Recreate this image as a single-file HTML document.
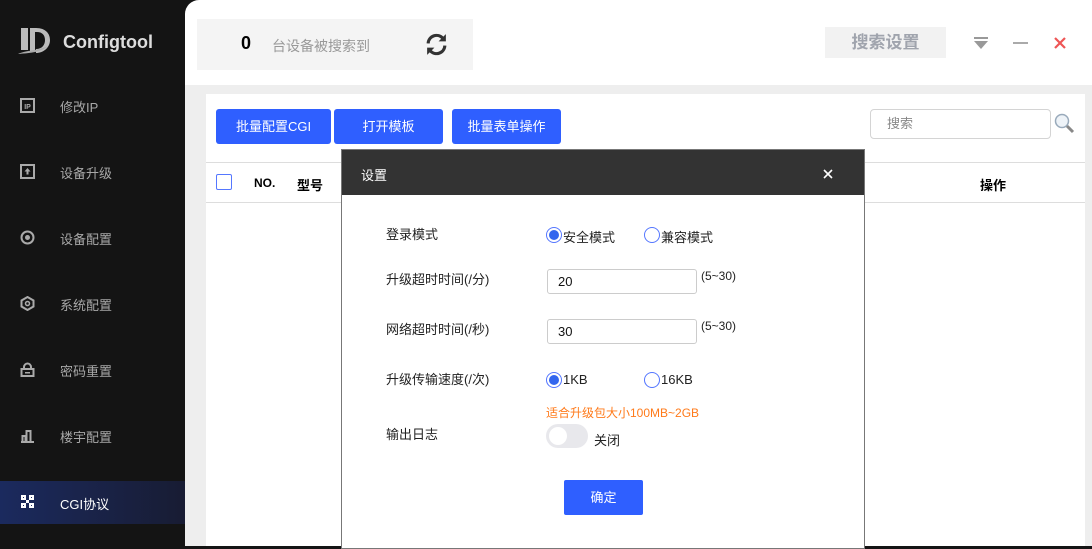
<!DOCTYPE html>
<html><head><meta charset="utf-8"><style>
*{margin:0;padding:0;box-sizing:border-box}
body{width:1092px;height:546px;overflow:hidden;background:#141414;font-family:"Liberation Sans","Noto Sans CJK SC",sans-serif;position:relative}
.abs{position:absolute}
.side{left:0;top:0;width:185px;height:546px;background:#141414}
.item{position:absolute;left:0;width:185px;height:44px;color:#a8a8a8;font-size:13px}
.item .ic{position:absolute;left:20px;top:14px;width:15px;height:15px}
.item .tx{position:absolute;left:60px;top:13px}
.main{left:185px;top:0;width:907px;height:546px;background:#fff;border-top-left-radius:14px}
.btn{position:absolute;top:109px;height:35px;background:#2f5fff;color:#fff;font-size:13px;text-align:center;line-height:35px;border-radius:3px}
.lbl{position:absolute;left:44px;font-size:13px;color:#222}
.radio{position:absolute;width:16px;height:16px;border-radius:50%;border:1px solid #5577ff;background:#fff}
.radio.on::after{content:"";position:absolute;left:2px;top:2px;width:10px;height:10px;border-radius:50%;background:#3366ee}
.inp{position:absolute;left:205px;width:150px;height:25px;border:1px solid #ccc;border-radius:3px;font-size:13px;padding-left:10px;line-height:23px;color:#111}
</style></head><body>
<div class="abs side">
  <svg class="abs" style="left:17px;top:24px" width="36" height="36" viewBox="0 0 36 36"><path d="M4 4h7v22H4z M13 4h6c10 0 14 6 14 12 0 8-7 13-14 13v-4c6 0 9-4 9-9s-3-8-8-8h-2v20h-5z" fill="#bbb"/><path d="M1 30c8-4 20-3 30-8-8 7-20 7-30 8z" fill="#aaa"/></svg>
  <div class="abs" style="left:63px;top:32px;color:#ddd;font-size:18px;font-weight:bold">Configtool</div>
  <div class="item" style="top:84px"><svg class="ic" width="15" height="15" viewBox="0 0 15 15"><rect x="1" y="1" width="13" height="13" fill="none" stroke="#aaa" stroke-width="2"/><text x="7.5" y="11" font-size="7" fill="#aaa" text-anchor="middle" font-weight="bold" font-family="Liberation Sans">IP</text></svg><span class="tx">修改IP</span></div>
  <div class="item" style="top:150px"><svg class="ic" width="15" height="15" viewBox="0 0 15 15"><rect x="1" y="1" width="13" height="13" fill="none" stroke="#aaa" stroke-width="2"/><path d="M7.5 4l3 3.5h-2v3h-2v-3h-2z" fill="#aaa"/></svg><span class="tx">设备升级</span></div>
  <div class="item" style="top:216px"><svg class="ic" width="15" height="15" viewBox="0 0 15 15"><circle cx="7.5" cy="7.5" r="6" fill="none" stroke="#aaa" stroke-width="2"/><circle cx="7.5" cy="7.5" r="2.5" fill="#aaa"/></svg><span class="tx">设备配置</span></div>
  <div class="item" style="top:282px"><svg class="ic" width="15" height="15" viewBox="0 0 15 15"><path d="M7.5 1l6 3.5v6L7.5 14l-6-3.5v-6z" fill="none" stroke="#aaa" stroke-width="2"/><circle cx="7.5" cy="7.5" r="2" fill="none" stroke="#aaa" stroke-width="1.5"/></svg><span class="tx">系统配置</span></div>
  <div class="item" style="top:348px"><svg class="ic" width="15" height="15" viewBox="0 0 15 15"><path d="M4 7V5a3.5 3.5 0 0 1 7 0v2" fill="none" stroke="#aaa" stroke-width="2"/><rect x="1.5" y="7" width="12" height="7" fill="none" stroke="#aaa" stroke-width="2"/><rect x="5" y="10" width="5" height="1.5" fill="#aaa"/></svg><span class="tx">密码重置</span></div>
  <div class="item" style="top:414px"><svg class="ic" width="15" height="15" viewBox="0 0 15 15"><path d="M1 14h13M2.5 14V8h3v6M6.5 14V3h4v11" fill="none" stroke="#aaa" stroke-width="2"/></svg><span class="tx">楼宇配置</span></div>
  <div class="item" style="top:481px;height:43px;background:linear-gradient(90deg,#1b2a5e,#181c33);color:#fff"><svg class="ic" width="15" height="15" style="top:13px" viewBox="0 0 15 15" ><path d="M1 1h5v5H1zM9 1h5v5H9zM1 9h5v5H1zM9 9h5v5H9zM6 6h3v3H6z" fill="#fff"/><path d="M3 3h1v1H3zM11 3h1v1h-1zM3 11h1v1H3zM11 11h1v1h-1z" fill="#1b2a5e"/></svg><span class="tx">CGI协议</span></div>
</div>
<div class="abs main"></div>
<div class="abs" style="left:197px;top:19px;width:276px;height:51px;background:#f4f4f4"></div>
<div class="abs" style="left:241px;top:33px;font-size:18px;font-weight:bold;color:#000">0</div>
<div class="abs" style="left:272px;top:36px;font-size:14px;color:#999">台设备被搜索到</div>
<svg class="abs" style="left:424px;top:32px" width="25" height="25" viewBox="0 0 24 24"><path d="M4 11a8 8 0 0 1 14-5" fill="none" stroke="#333" stroke-width="3"/><path d="M20 13a8 8 0 0 1-14 5" fill="none" stroke="#333" stroke-width="3"/><path d="M21 2v7h-7z M3 22v-7h7z" fill="#333"/></svg>
<div class="abs" style="left:825px;top:27px;width:121px;height:31px;background:#f2f2f2;color:#a0a4ad;font-size:17px;font-weight:bold;text-align:center;line-height:31px">搜索设置</div>
<svg class="abs" style="left:973px;top:36px" width="16" height="14" viewBox="0 0 16 14"><rect x="1" y="1" width="14" height="2" fill="#999"/><path d="M1 5h14l-7 8z" fill="#999"/></svg>
<div class="abs" style="left:1013px;top:42px;width:15px;height:2px;background:#aaa"></div>
<svg class="abs" style="left:1053px;top:36px" width="14" height="14" viewBox="0 0 14 14"><path d="M2 2l10 10M12 2L2 12" stroke="#ee5555" stroke-width="2.2"/></svg>
<div class="abs" style="left:185px;top:85px;width:907px;height:461px;background:#eeeeee"></div>
<div class="abs" style="left:206px;top:94px;width:879px;height:452px;background:#fff"></div>
<div class="btn" style="left:216px;width:115px">批量配置CGI</div>
<div class="btn" style="left:334px;width:109px">打开模板</div>
<div class="btn" style="left:452px;width:109px">批量表单操作</div>
<div class="abs" style="left:870px;top:109px;width:181px;height:30px;border:1px solid #d4d4d4;border-radius:4px;font-size:13px;color:#888;padding-left:16px;line-height:28px">搜索</div>
<svg class="abs" style="left:1053px;top:112px" width="22" height="22" viewBox="0 0 22 22"><circle cx="9" cy="9" r="6.5" fill="#eef3f8" stroke="#9ab" stroke-width="1.5"/><path d="M14 14l6 6" stroke="#888" stroke-width="3"/></svg>
<div class="abs" style="left:206px;top:162px;width:879px;height:1px;background:#ddd"></div>
<div class="abs" style="left:206px;top:202px;width:879px;height:1px;background:#ddd"></div>
<div class="abs" style="left:216px;top:174px;width:16px;height:16px;border:1px solid #5577ff;border-radius:2px"></div>
<div class="abs" style="left:254px;top:176px;font-size:12px;font-weight:bold">NO.</div>
<div class="abs" style="left:297px;top:175px;font-size:13px;font-weight:bold">型号</div>
<div class="abs" style="left:980px;top:175px;font-size:13px;font-weight:bold">操作</div>
<div class="abs" style="left:341px;top:149px;width:524px;height:400px;background:#fff;border:1px solid #777">
  <div class="abs" style="left:0;top:0;width:522px;height:45px;background:#333;color:#fff;font-size:13px"><span class="abs" style="left:19px;top:15px">设置</span>
  <svg class="abs" style="left:481px;top:19px" width="10" height="10" viewBox="0 0 10 10"><path d="M1 1l8 8M9 1L1 9" stroke="#fff" stroke-width="1.6"/></svg></div>
  <div class="lbl" style="top:74px">登录模式</div>
  <div class="radio on" style="left:204px;top:77px"></div><div class="lbl" style="left:221px;top:77px">安全模式</div>
  <div class="radio" style="left:302px;top:77px"></div><div class="lbl" style="left:319px;top:77px">兼容模式</div>
  <div class="lbl" style="top:119px">升级超时时间(/分)</div>
  <div class="inp" style="top:119px">20</div><div class="lbl" style="left:359px;top:119px;font-size:12px">(5~30)</div>
  <div class="lbl" style="top:169px">网络超时时间(/秒)</div>
  <div class="inp" style="top:169px">30</div><div class="lbl" style="left:359px;top:169px;font-size:12px">(5~30)</div>
  <div class="lbl" style="top:219px">升级传输速度(/次)</div>
  <div class="radio on" style="left:204px;top:222px"></div><div class="lbl" style="left:221px;top:222px">1KB</div>
  <div class="radio" style="left:302px;top:222px"></div><div class="lbl" style="left:319px;top:222px">16KB</div>
  <div class="lbl" style="left:204px;top:254px;color:#ff7a1a;font-size:12px">适合升级包大小100MB~2GB</div>
  <div class="lbl" style="top:274px">输出日志</div>
  <div class="abs" style="left:204px;top:274px;width:42px;height:24px;border-radius:12px;background:#e8e8ec"><div class="abs" style="left:3px;top:3px;width:18px;height:18px;border-radius:50%;background:#fff"></div></div>
  <div class="lbl" style="left:252px;top:280px">关闭</div>
  <div class="abs" style="left:222px;top:330px;width:79px;height:35px;background:#2f5fff;border-radius:2px;color:#fff;font-size:13px;text-align:center;line-height:35px">确定</div>
</div>
</body></html>
